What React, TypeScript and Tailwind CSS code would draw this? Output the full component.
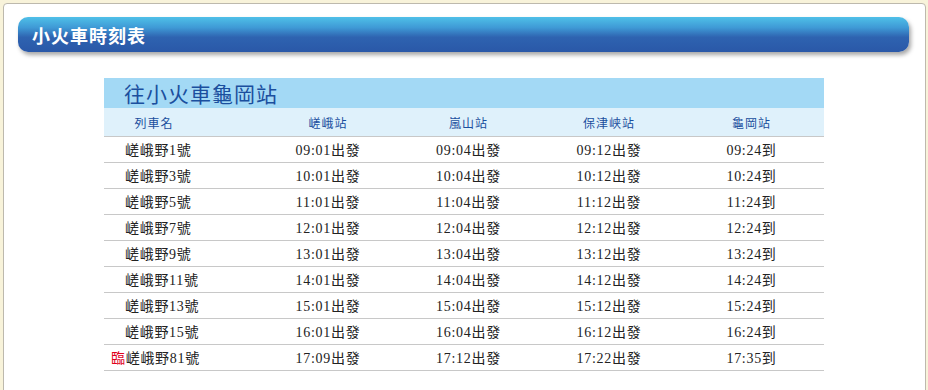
const rows = [
  { name: "嵯峨野1號", times: ["09:01出發", "09:04出發", "09:12出發", "09:24到"] },
  { name: "嵯峨野3號", times: ["10:01出發", "10:04出發", "10:12出發", "10:24到"] },
  { name: "嵯峨野5號", times: ["11:01出發", "11:04出發", "11:12出發", "11:24到"] },
  { name: "嵯峨野7號", times: ["12:01出發", "12:04出發", "12:12出發", "12:24到"] },
  { name: "嵯峨野9號", times: ["13:01出發", "13:04出發", "13:12出發", "13:24到"] },
  { name: "嵯峨野11號", times: ["14:01出發", "14:04出發", "14:12出發", "14:24到"] },
  { name: "嵯峨野13號", times: ["15:01出發", "15:04出發", "15:12出發", "15:24到"] },
  { name: "嵯峨野15號", times: ["16:01出發", "16:04出發", "16:12出發", "16:24到"] },
  { name: "嵯峨野81號", times: ["17:09出發", "17:12出發", "17:22出發", "17:35到"], extra: true },
];

const stations = ["嵯峨站", "嵐山站", "保津峡站", "龜岡站"];

export default function App() {
  return (
    <div className="w-[928px] h-[390px] overflow-hidden bg-[#f8f3da] pt-[3px] pl-[3px] pr-[2px]">
      <div className="h-[400px] bg-white border border-[#bdb9ad] rounded-[4px] pt-[13px] px-[14px]">
        {/* title bar */}
        <div className="h-[35px] rounded-[10px] bg-[linear-gradient(to_bottom,#4fc0e8_0%,#3f9ad6_30%,#2e63b0_58%,#2a58a8_100%)] shadow-[2px_3px_4px_rgba(0,0,0,0.35)] flex items-center pl-[14px] mr-[2px]">
          <h1 className="text-white font-bold text-[18px] leading-none font-['Noto_Sans_CJK_TC','Noto_Sans',sans-serif] tracking-[1px]">
            小火車時刻表
          </h1>
        </div>

        {/* timetable */}
        <div className="w-[720px] ml-[86px] mt-[26px]">
          <div className="h-[30px] bg-[#a3d9f5] flex items-center pl-[20px] pt-[1px]">
            <h2 className="text-[#1b4f9e] text-[21px] leading-none font-['Noto_Sans_CJK_TC',sans-serif] tracking-[1px]">
              往小火車龜岡站
            </h2>
          </div>
          <div className="h-[29px] pt-[2px] bg-[#dff1fb] border-b border-[#c8c8c8] grid grid-cols-[154px_140px_141px_140px_145px] items-center text-[12px] text-[#1b4f9e] font-['Noto_Sans_CJK_TC',sans-serif] tracking-[1px]">
            <div className="text-center pr-[54px]">列車名</div>
            {stations.map((s) => (
              <div key={s} className="text-center">
                {s}
              </div>
            ))}
          </div>
          {rows.map((r) => (
            <div
              key={r.name}
              className="h-[26px] pt-[2px] border-b border-[#c8c8c8] grid grid-cols-[154px_140px_141px_140px_145px] items-center text-[14px] tracking-[0.7px] text-[#222] font-['Liberation_Serif','Noto_Sans_CJK_TC',serif]"
            >
              <div className="pl-[21px] whitespace-nowrap">
                {r.extra && <span className="text-[#e0001b] -ml-[14px]">臨</span>}
                {r.name}
              </div>
              {r.times.map((t, i) => (
                <div key={i} className="text-center">
                  {t}
                </div>
              ))}
            </div>
          ))}
        </div>
      </div>
    </div>
  );
}
